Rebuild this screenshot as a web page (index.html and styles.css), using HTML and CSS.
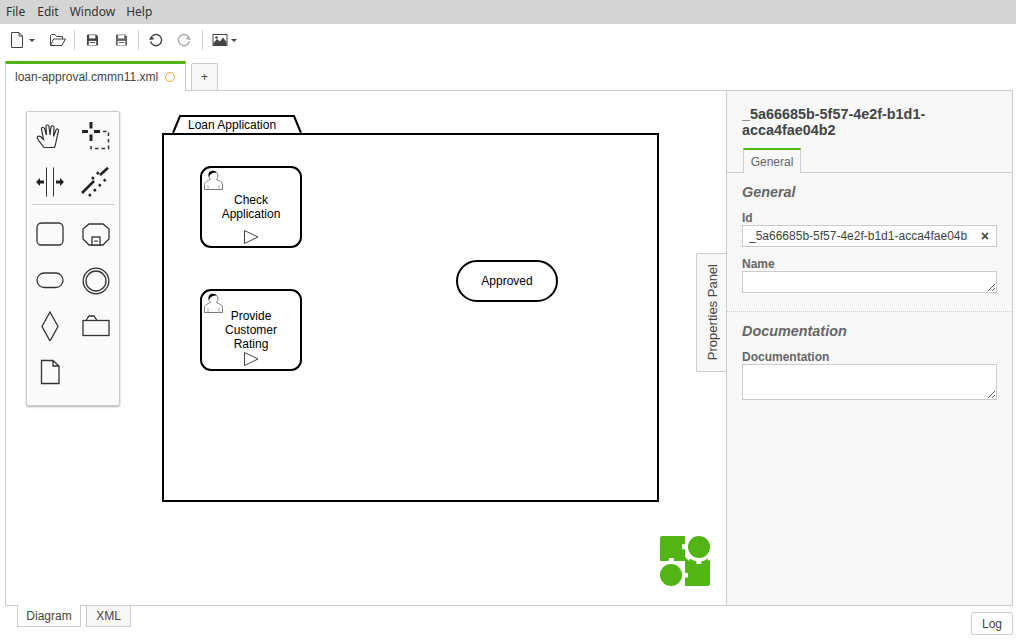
FILE: index.html
```html
<!DOCTYPE html>
<html lang="en">
<head>
<meta charset="utf-8">
<title>Camunda Modeler</title>
<link rel="stylesheet" href="styles.css">
</head>
<body>
<div class="app">
  <nav class="menu">
    <span class="menu-item menu-file">File</span>
    <span class="menu-item menu-edit">Edit</span>
    <span class="menu-item menu-window">Window</span>
    <span class="menu-item">Help</span>
  </nav>
  <div class="toolbar">
    <div class="btn btn-new">
      <svg class="ico" width="16" height="16" viewBox="0 0 16 16"><path d="M2.5 .5H10L13.5 4V15.5H2.5Z M10 .5V4H13.5" fill="none" stroke="#444"/></svg>
      <i class="caret"></i>
    </div>
    <div class="btn btn-open">
      <svg class="ico" width="16" height="16" viewBox="0 0 16 16"><path d="M.5 13.5V3.5L1.5 2.5H5L6.5 4.5H12.5V7M.5 13.5H12L15.5 7H3.5Z" fill="none" stroke="#444"/></svg>
    </div>
    <i class="sep sep-a"></i>
    <div class="btn btn-save">
      <svg class="ico" width="13" height="14" viewBox="0 0 14 14"><path d="M1 1.500A.5.5 0 0 1 1.500 1H11L13 3V12.500A.5.5 0 0 1 12.500 13H1.500A.5.5 0 0 1 1 12.500Z" fill="#444"/><rect x="3.500" y="1.800" width="6.500" height="3.500" fill="#fff"/><rect x="3" y="8" width="8" height="4.500" fill="#fff"/><rect x="4" y="9.200" width="6" height="1" fill="#444"/></svg>
    </div>
    <div class="btn btn-saveas">
      <svg class="ico" width="13" height="14" viewBox="0 0 14 14"><path d="M1 1.500A.5.5 0 0 1 1.500 1H11L13 3V12.500A.5.5 0 0 1 12.500 13H1.500A.5.5 0 0 1 1 12.500Z" fill="#666"/><rect x="3.500" y="1.800" width="6.500" height="3.500" fill="#fff"/><rect x="3" y="8" width="8" height="4.500" fill="#fff"/><rect x="4" y="9.200" width="6" height="1" fill="#666"/></svg>
    </div>
    <i class="sep sep-b"></i>
    <div class="btn btn-undo">
      <svg class="ico" width="16" height="16" viewBox="0 0 16 16"><path d="M4 4.200A5.600 5.600 0 1 1 2.600 9.500" fill="none" stroke="#444" stroke-width="1.400"/><path d="M.8 7.600H6.200L3.500 3.800Z" fill="#444" transform="rotate(-8 3.500 6)"/></svg>
    </div>
    <div class="btn btn-redo">
      <svg class="ico" width="16" height="16" viewBox="0 0 16 16"><path d="M12 4.200A5.600 5.600 0 1 0 13.400 9.500" fill="none" stroke="#aaa" stroke-width="1.400"/><path d="M15.200 7.600H9.800L12.500 3.800Z" fill="#aaa" transform="rotate(8 12.500 6)"/></svg>
    </div>
    <i class="sep sep-c"></i>
    <div class="btn btn-image">
      <svg class="ico" width="16" height="14" viewBox="0 0 16 14"><rect x="1" y="1.500" width="14" height="11" fill="#fff" stroke="#444"/><path d="M1.500 12V10L5 6L8 8.500L11 4.500L14.500 9V12Z" fill="#444"/><circle cx="4.500" cy="4.500" r="1.300" fill="#444"/></svg>
      <i class="caret"></i>
    </div>
  </div>
  <div class="tabs">
    <div class="tab tab-active">loan-approval.cmmn11.xml<i class="dirty"></i></div>
    <div class="tab tab-add">+</div>
  </div>
  <main class="main">
    <section class="canvas">
      <svg class="diagram" width="720" height="514" viewBox="0 0 720 514">
        <g transform="translate(-6 -91)">
          <rect x="163" y="134" width="495" height="367" fill="#fff" stroke="#000" stroke-width="2"/>
          <path d="M173 133L180 116H294L301 133" fill="#fff" stroke="#000" stroke-width="2"/>
          <text class="dg-text" x="188" y="129">Loan Application</text>

          <rect x="201" y="167" width="100" height="80" rx="10" fill="#fff" stroke="#000" stroke-width="2"/>
          <g transform="translate(204 170)">
            <path d="M.500 19.500V14.500C.500 11.500 4 11 6.500 9.500C4.500 7.500 4 1.500 9.500 1.500C15 1.500 14.500 7.500 12.500 9.500C15 11 18.500 11.500 18.500 14.500V19.500Z" fill="#fff" stroke="#777"/>
            <path d="M4.800 7C3.800 3 5.500 .8 9 .8C11 .8 12 1.500 12.500 2.500C10.500 2.200 6.500 3 4.800 7Z" fill="#000"/>
            <path d="M4 15V19.500M15 15V19.500" stroke="#aaa" fill="none"/>
          </g>
          <text class="dg-text dg-mid" x="251" y="204">Check</text>
          <text class="dg-text dg-mid" x="251" y="218">Application</text>
          <path d="M244.500 230.500L258 237L244.500 243.500Z" fill="#fff" stroke="#444"/>

          <rect x="201" y="290" width="100" height="80" rx="10" fill="#fff" stroke="#000" stroke-width="2"/>
          <g transform="translate(204 293)">
            <path d="M.500 19.500V14.500C.500 11.500 4 11 6.500 9.500C4.500 7.500 4 1.500 9.500 1.500C15 1.500 14.500 7.500 12.500 9.500C15 11 18.500 11.500 18.500 14.500V19.500Z" fill="#fff" stroke="#777"/>
            <path d="M4.800 7C3.800 3 5.500 .8 9 .8C11 .8 12 1.500 12.500 2.500C10.500 2.200 6.500 3 4.800 7Z" fill="#000"/>
            <path d="M4 15V19.500M15 15V19.500" stroke="#aaa" fill="none"/>
          </g>
          <text class="dg-text dg-mid" x="251" y="320">Provide</text>
          <text class="dg-text dg-mid" x="251" y="334">Customer</text>
          <text class="dg-text dg-mid" x="251" y="348">Rating</text>
          <path d="M244.500 352.500L258 359L244.500 365.500Z" fill="#fff" stroke="#444"/>

          <rect x="457" y="261" width="100" height="40" rx="20" fill="#fff" stroke="#000" stroke-width="2"/>
          <text class="dg-text dg-mid" x="507" y="285">Approved</text>

          <g>
            <rect x="660" y="536" width="50" height="50" rx="2" fill="#52b415"/>
            <rect x="685" y="534" width="27" height="23" fill="#fff"/>
            <rect x="658" y="561" width="27" height="27" fill="#fff"/>
            <circle cx="699" cy="547" r="15.500" fill="none" stroke="#fff" stroke-width="3" stroke-dasharray="5 7.170" stroke-dashoffset="2.500"/>
            <circle cx="671" cy="575" r="15.500" fill="none" stroke="#fff" stroke-width="3" stroke-dasharray="5 7.170" stroke-dashoffset="2.500"/>
            <circle cx="699" cy="547" r="14.500" fill="#fff"/>
            <circle cx="671" cy="575" r="14.500" fill="#fff"/>
            <circle cx="699" cy="547" r="11" fill="#52b415"/>
            <circle cx="671" cy="575" r="11" fill="#52b415"/>
          </g>
        </g>
      </svg>

      <div class="palette">
        <div class="pal-grid">
          <div class="pal-cell"><svg width="30" height="30" viewBox="0 0 30 30"><path d="M9 26.500C7 23.500 3.500 19.500 2.500 17.500C1.500 15.500 3.500 14.500 5.500 15.500L8.500 18.500L6.500 8.500C6 6 8.500 5.500 9.500 7.500L11.500 14L11 5.500C11 3.500 13.500 3.500 14 5.500L15 14L16 6C16.500 4 19 4.500 19 6.500L18.500 15.500L21 9C21.500 7 24 8 23.500 10L21.500 18.500C21 21.500 20.500 24 19.500 26.500Z" fill="none" stroke="#333" stroke-width="1.200"/></svg></div>
          <div class="pal-cell"><svg width="30" height="30" viewBox="0 0 30 30"><path d="M1 10.500H7M13 10.500H19M10 1V7.500M10 13.500V20" stroke="#222" stroke-width="3" fill="none"/><path d="M22 10.500H27.500V27.500H10V23" fill="none" stroke="#333" stroke-width="1.500" stroke-dasharray="3.500 3"/></svg></div>

          <div class="pal-cell"><svg width="30" height="30" viewBox="0 0 30 30"><path d="M11.500 .5V29.500M18.500 .5V29.500" stroke="#333" fill="none"/><path d="M1 15L5 11V13.500H9V16.500H5V19Z M29 15L25 11V13.500H21V16.500H25V19Z" fill="#222"/></svg></div>
          <div class="pal-cell"><svg width="30" height="30" viewBox="0 0 30 30"><path d="M1 26L13 14M19 8L27 .8" stroke="#222" stroke-width="2.600" fill="none"/><path d="M8 29L26 11M11 12L20 3" stroke="#222" stroke-width="2.600" stroke-dasharray="2.500 4.500" fill="none"/></svg></div>

          <div class="pal-rule"></div>

          <div class="pal-cell"><svg width="30" height="30" viewBox="0 0 30 30"><rect x="2" y="4" width="26" height="22" rx="4.500" fill="none" stroke="#333" stroke-width="1.300"/></svg></div>
          <div class="pal-cell"><svg width="30" height="30" viewBox="0 0 30 30"><path d="M8 5H22L28 10V20L22 26H8L2 20V10Z" fill="none" stroke="#333" stroke-width="1.300"/><rect x="11" y="18" width="8" height="8" fill="#fafafa" stroke="#333" stroke-width="1.300"/><path d="M13 22H17" stroke="#333"/></svg></div>

          <div class="pal-cell"><svg width="30" height="30" viewBox="0 0 30 30"><rect x="2" y="8" width="26" height="14.500" rx="7.250" fill="none" stroke="#333" stroke-width="1.300"/></svg></div>
          <div class="pal-cell"><svg width="30" height="30" viewBox="0 0 30 30"><circle cx="15" cy="16" r="12.800" fill="none" stroke="#333" stroke-width="1.300"/><circle cx="15" cy="16" r="10" fill="none" stroke="#333" stroke-width="1.300"/></svg></div>

          <div class="pal-cell"><svg width="30" height="30" viewBox="0 0 30 30"><path d="M15 1L23 15.500L15 30L7 15.500Z" fill="none" stroke="#333" stroke-width="1.300"/></svg></div>
          <div class="pal-cell"><svg width="30" height="30" viewBox="0 0 30 30"><rect x="2" y="9.500" width="26" height="15" fill="none" stroke="#333" stroke-width="1.300"/><path d="M5 9.500L8 5H13L16 9.500" fill="none" stroke="#333" stroke-width="1.300"/></svg></div>

          <div class="pal-cell"><svg width="30" height="30" viewBox="0 0 30 30"><path d="M6.500 3.500H18L24 9V26.500H6.500Z M18 3.500V9H24" fill="none" stroke="#333" stroke-width="1.300"/></svg></div>
        </div>
      </div>

      <div class="panel-toggle"><span>Properties Panel</span></div>
    </section>

    <aside class="props">
      <h1 class="props-title">_5a66685b-5f57-4e2f-b1d1-acca4fae04b2</h1>
      <div class="props-tabs"><div class="props-tab">General</div></div>
      <div class="group">
        <h2 class="group-title">General</h2>
        <label class="field-label" for="f-id">Id</label>
        <div class="input-wrap">
          <input class="field-input" id="f-id" type="text" value="_5a66685b-5f57-4e2f-b1d1-acca4fae04b2" readonly>
          <span class="clear">×</span>
        </div>
        <label class="field-label" for="f-name">Name</label>
        <textarea class="field-area area-name" id="f-name"></textarea>
      </div>
      <div class="group group-doc">
        <h2 class="group-title">Documentation</h2>
        <label class="field-label" for="f-doc">Documentation</label>
        <textarea class="field-area area-doc" id="f-doc"></textarea>
      </div>
    </aside>
  </main>
  <footer class="footer">
    <div class="view-tabs">
      <div class="view-tab view-active">Diagram</div>
      <div class="view-tab view-xml">XML</div>
    </div>
    <div class="log">Log</div>
  </footer>
</div>
</body>
</html>
```
FILE: styles.css
```css
* { box-sizing: border-box; }
html, body { margin: 0; padding: 0; background: #fff; }
body { font-family: "Liberation Sans", Arial, sans-serif; font-size: 12px; color: #444; }
.app { display: flex; flex-direction: column; width: 1016px; height: 640px; overflow: hidden; }

.menu { height: 24px; flex: none; background: #d4d4d4; display: flex; align-items: center; padding-left: 6px; padding-bottom: 1px; font-family: "Noto Sans", sans-serif; font-size: 12px; color: #333; }
.menu-file { margin-right: 12px; }
.menu-edit { margin-right: 11px; }
.menu-window { margin-right: 11px; }

.toolbar { height: 36px; flex: none; display: flex; align-items: center; padding-left: 9px; padding-bottom: 4px; background: #fff; }
.btn { height: 20px; display: flex; align-items: center; }
.btn-new { width: 34px; }
.btn-new .caret { margin-left: 4px; }
.btn-open { width: 29px; justify-content: center; }
.btn-save, .btn-saveas, .btn-undo, .btn-redo { width: 28px; justify-content: center; }
.btn-saveas { margin-left: 1px; }
.btn-image { width: 36px; padding-left: 6px; }
.btn-image .caret { margin-left: 3px; }
.caret { display: block; width: 0; height: 0; border-left: 3px solid transparent; border-right: 3px solid transparent; border-top: 3px solid #444; }
.sep { display: block; width: 1px; height: 20px; background: #ccc; }
.sep-a { margin: 0 3px 0 2px; }
.sep-b { margin: 0 3px; }
.sep-c { margin: 0 3px 0 4px; }

.tabs { height: 30px; flex: none; display: flex; align-items: flex-end; padding-left: 5px; position: relative; z-index: 2; }
.tab { border: 1px solid #ccc; background: #f8f8f8; }
.tab-active { width: 181px; height: 30px; margin-bottom: -1px; border-top: 3px solid #52b415; border-bottom: 0; background: #fff; display: flex; align-items: center; padding-left: 9px; padding-bottom: 2px; color: #444; }
.dirty { display: block; width: 10px; height: 10px; border: 1px solid #f0a830; border-radius: 50%; margin: 1px 0 0 7px; }
.tab-add { width: 27px; height: 27px; margin-left: 5px; border-bottom: 0; display: flex; align-items: center; justify-content: center; color: #444; border-radius: 2px 2px 0 0; }

.main { height: 516px; flex: none; margin: 0 3px 0 5px; border: 1px solid #ccc; display: flex; position: relative; }
.canvas { flex: 1; position: relative; background: #fff; min-width: 0; }
.diagram { position: absolute; left: 0; top: 0; display: block; }
.dg-text { font-family: "Liberation Sans", Arial, sans-serif; font-size: 12px; fill: #000; }
.dg-mid { text-anchor: middle; }

.palette { position: absolute; left: 20px; top: 20px; width: 94px; height: 295px; background: #fafafa; border: 1px solid #ccc; border-radius: 2px; box-shadow: 0 1px 2px rgba(0,0,0,.3); padding-top: 1px; }
.pal-grid { display: grid; grid-template-columns: 46px 46px; grid-template-rows: 46px 46px 6px 46px 46px 46px 46px; }
.pal-cell { display: flex; align-items: center; justify-content: center; }
.pal-rule { grid-column: 1 / 3; grid-row: 3; height: 1px; background: #ccc; margin: -1px 5px 0; align-self: start; }

.panel-toggle { position: absolute; right: -1px; top: 162px; width: 31px; height: 119px; background: #f8f8f8; border: 1px solid #ccc; border-right: 0; border-radius: 2px 0 0 2px; display: flex; align-items: center; justify-content: center; }
.panel-toggle span { writing-mode: vertical-rl; transform: rotate(180deg); font-size: 13px; color: #444; white-space: nowrap; }

.props { width: 286px; flex: none; background: #f8f8f8; border-left: 1px solid #ccc; position: relative; z-index: 1; }
.props-title { margin: 0; padding: 15px 70px 0 15px; font-size: 14.400px; line-height: 16px; font-weight: bold; color: #444; height: 57px; }
.props-tabs { height: 25px; border-bottom: 1px solid #ccc; padding-left: 16px; display: flex; }
.props-tab { width: 58px; height: 25px; background: #f8f8f8; border: 1px solid #ccc; border-top: 2px solid #52b415; border-bottom: 0; display: flex; align-items: center; justify-content: center; font-size: 12px; color: #666; }
.group { padding: 10px 15px 0 15px; }
.group-title { margin: 0 0 11px; font-size: 14.400px; line-height: 18px; font-style: italic; font-weight: bold; color: #666; }
.field-label { display: block; font-size: 12px; line-height: 13px; font-weight: bold; color: #666; }
.input-wrap { position: relative; margin-bottom: 11px; }
.field-input { display: block; width: 255px; height: 22px; border: 1px solid #ccc; background: #fff; font-family: "Liberation Sans", Arial, sans-serif; font-size: 12px; color: #444; padding: 0 28px 0 6px; margin: 0; outline: 0; border-radius: 0; }
.clear { position: absolute; right: 8px; top: 3px; font-size: 14px; line-height: 16px; font-weight: bold; color: #444; }
.field-area { display: block; width: 255px; border: 1px solid #ccc; background: #fff; margin: 0; padding: 2px 6px; font-family: "Liberation Sans", Arial, sans-serif; font-size: 12px; outline: 0; border-radius: 0; }
.area-name { height: 22px; }
.area-doc { height: 36px; }
.group-doc { border-top: 1px dotted #ccc; margin-top: 18px; padding-top: 10px; }

.footer { height: 34px; flex: none; display: flex; justify-content: space-between; padding: 0 3px 0 17px; position: relative; z-index: 2; }
.view-tabs { display: flex; align-items: flex-start; margin-top: -1px; }
.view-tab { display: flex; align-items: center; justify-content: center; border: 1px solid #ccc; border-top: 0; color: #444; font-size: 12px; }
.view-active { width: 64px; height: 22px; background: #fff; padding-top: 1px; }
.view-xml { width: 45px; height: 21px; margin-top: 1px; margin-left: 5px; background: #f8f8f8; }
.log { width: 42px; height: 23px; margin-top: 6px; border: 1px solid #ccc; border-radius: 2px; display: flex; align-items: center; justify-content: center; font-size: 12px; color: #444; background: #fff; }
```
